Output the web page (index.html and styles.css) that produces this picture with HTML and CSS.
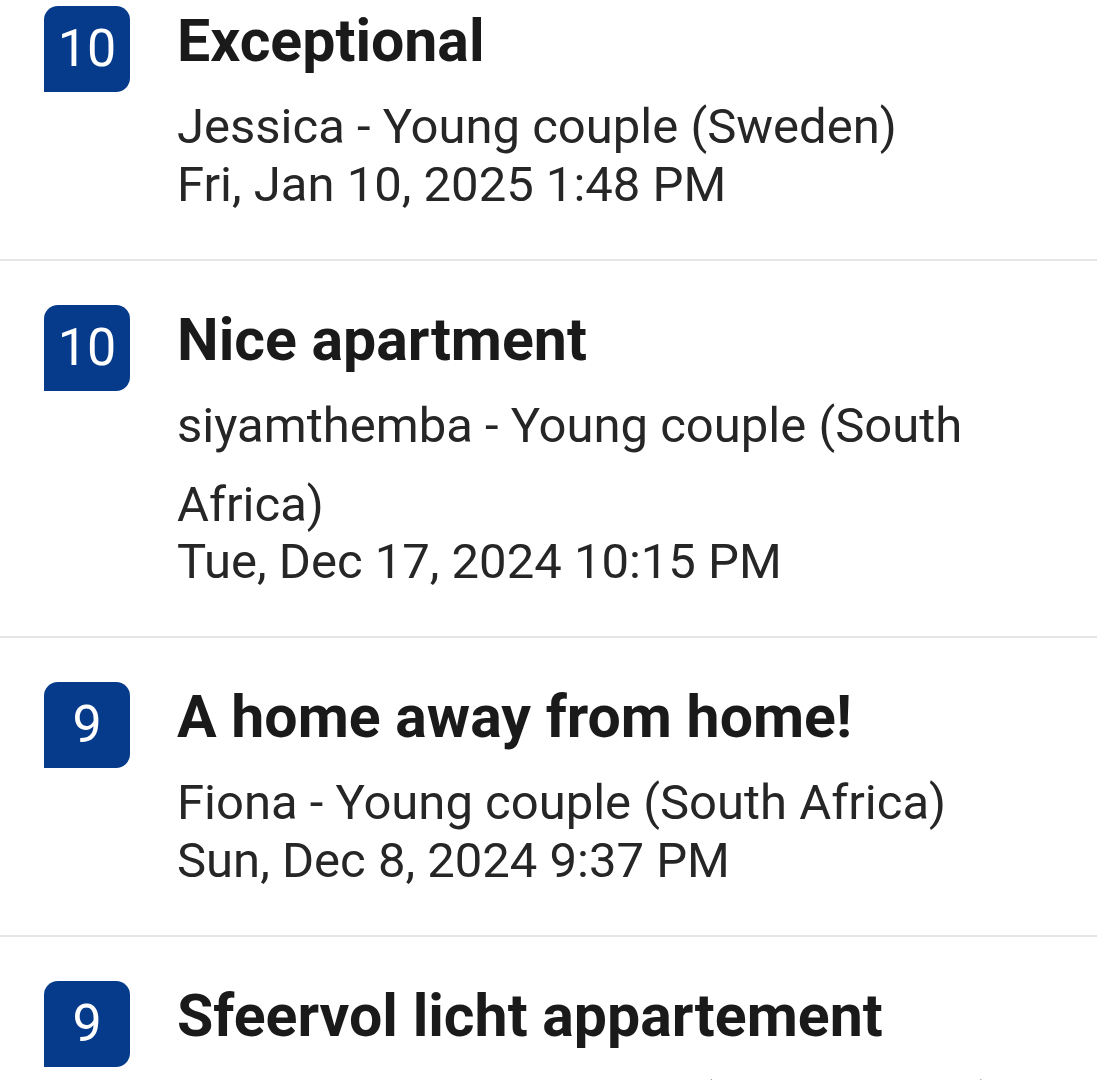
FILE: index.html
```html
<!DOCTYPE html>
<html>
    <head>
        <title>Reviews</title>
        <meta charset="UTF-8">
        <link rel="stylesheet" href="styles.css">
    </head>
    <body>
        <ul class="reviews">
            <li class="review">
                <div class="score">10</div>
                <div class="body">
                    <h2 class="title">Exceptional</h2>
                    <p class="author">Jessica - Young couple (Sweden)</p>
                    <p class="date">Fri, Jan 10, 2025 1:48 PM</p>
                </div>
            </li>
            <li class="review">
                <div class="score">10</div>
                <div class="body">
                    <h2 class="title">Nice apartment</h2>
                    <p class="author">siyamthemba - Young couple (South Africa)</p>
                    <p class="date">Tue, Dec 17, 2024 10:15 PM</p>
                </div>
            </li>
            <li class="review">
                <div class="score">9</div>
                <div class="body">
                    <h2 class="title">A home away from home!</h2>
                    <p class="author">Fiona - Young couple (South Africa)</p>
                    <p class="date">Sun, Dec 8, 2024 9:37 PM</p>
                </div>
            </li>
            <li class="review">
                <div class="score">9</div>
                <div class="body">
                    <h2 class="title">Sfeervol licht appartement</h2>
                    <p class="author">Marieke - Young couple (Netherlands)</p>
                    <p class="date">Sat, Nov 30, 2024 4:12 PM</p>
                </div>
            </li>
        </ul>
    </body>
</html>
```

FILE: styles.css
```css
body {
    margin: 0;
    background-color: white;
    font-family: Roboto, "Noto Sans", sans-serif;
    color: #1a1a1a;
    overflow: hidden;
}
ul.reviews {
    list-style: none;
    margin: -39px 0 0 0;
    padding: 0;
}
li.review {
    display: flex;
    align-items: flex-start;
    gap: 47px;
    padding: 45px 46px 45px 44px;
    border-bottom: 2px solid #e5e5e5;
}
li.review + li.review {
    padding-top: 44px;
}
div.score {
    flex: none;
    width: 86px;
    height: 86px;
    border-radius: 14px 14px 14px 0;
    background-color: #063b8c;
    color: white;
    font-size: 52px;
    line-height: 86px;
    text-align: center;
}
div.body {
    flex: 1;
    min-width: 0;
}
h2.title {
    margin: 0;
    font-size: 59px;
    line-height: 70px;
    font-weight: 700;
    color: #1a1a1a;
}
p.author {
    margin: 11px 0 0 0;
    font-size: 49px;
    line-height: 79px;
    color: #262626;
}
p.date {
    margin: -10.5px 0 0 0;
    font-size: 49px;
    line-height: 58px;
    color: #262626;
}
```
